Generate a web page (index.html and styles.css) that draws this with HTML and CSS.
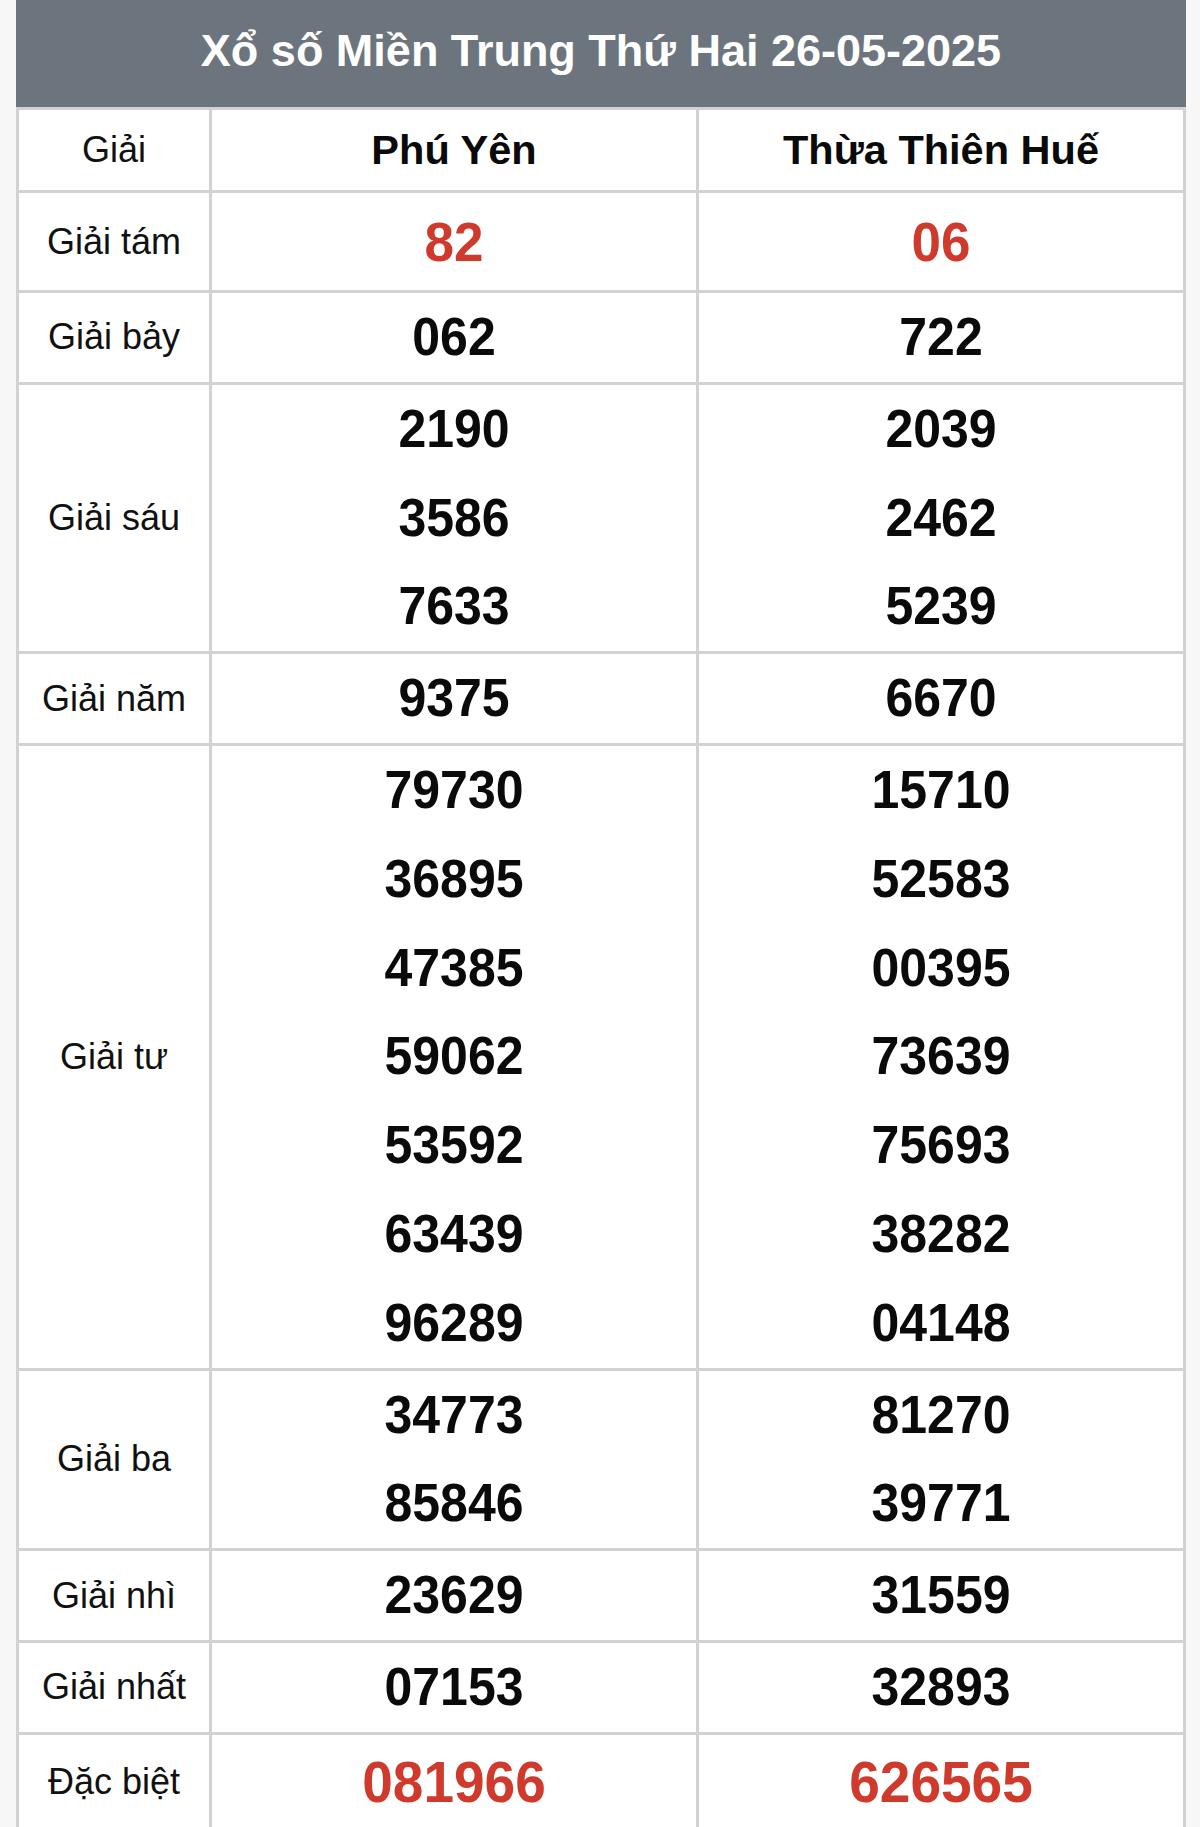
FILE: index.html
```html
<!DOCTYPE html>
<html lang="vi">
<head>
<meta charset="utf-8">
<title>Xổ số Miền Trung Thứ Hai 26-05-2025</title>
<link rel="stylesheet" href="styles.css">
</head>
<body>
<div class="wrap">
  <div class="title">Xổ số Miền Trung Thứ Hai 26-05-2025</div>
  <div class="grid">
    <div class="cell label head">Giải</div>
    <div class="cell name">Phú Yên</div>
    <div class="cell name">Thừa Thiên Huế</div>

    <div class="cell label tam">Giải tám</div>
    <div class="cell nums red tam"><div>82</div></div>
    <div class="cell nums red tam"><div>06</div></div>

    <div class="cell label">Giải bảy</div>
    <div class="cell nums"><div>062</div></div>
    <div class="cell nums"><div>722</div></div>

    <div class="cell label">Giải sáu</div>
    <div class="cell nums"><div>2190</div><div>3586</div><div>7633</div></div>
    <div class="cell nums"><div>2039</div><div>2462</div><div>5239</div></div>

    <div class="cell label">Giải năm</div>
    <div class="cell nums"><div>9375</div></div>
    <div class="cell nums"><div>6670</div></div>

    <div class="cell label">Giải tư</div>
    <div class="cell nums"><div>79730</div><div>36895</div><div>47385</div><div>59062</div><div>53592</div><div>63439</div><div>96289</div></div>
    <div class="cell nums"><div>15710</div><div>52583</div><div>00395</div><div>73639</div><div>75693</div><div>38282</div><div>04148</div></div>

    <div class="cell label">Giải ba</div>
    <div class="cell nums"><div>34773</div><div>85846</div></div>
    <div class="cell nums"><div>81270</div><div>39771</div></div>

    <div class="cell label">Giải nhì</div>
    <div class="cell nums"><div>23629</div></div>
    <div class="cell nums"><div>31559</div></div>

    <div class="cell label">Giải nhất</div>
    <div class="cell nums"><div>07153</div></div>
    <div class="cell nums"><div>32893</div></div>

    <div class="cell label db">Đặc biệt</div>
    <div class="cell nums red db"><div>081966</div></div>
    <div class="cell nums red db"><div>626565</div></div>
  </div>
</div>
</body>
</html>
```

FILE: styles.css
```css
html, body {
  margin: 0;
  padding: 0;
}
body {
  background: #f7f7f7;
  font-family: "Liberation Sans", Arial, sans-serif;
  color: #0a0a0a;
}
.wrap {
  width: 1170px;
  margin-left: 16px;
  background: #ffffff;
}
.title {
  height: 107px;
  background: #6c757d;
  color: #ffffff;
  font-weight: bold;
  font-size: 45px;
  display: flex;
  align-items: center;
  justify-content: center;
  padding-bottom: 6px;
  box-sizing: border-box;
}
.grid {
  display: grid;
  grid-template-columns: 190px 484px 484px;
  gap: 3px;
  padding: 3px;
  background: #d2d2d2;
}
.cell {
  background: #ffffff;
}
.label {
  display: flex;
  align-items: center;
  justify-content: center;
  font-size: 36px;
  color: #111;
}
.head {
  height: 80px;
}
.name {
  height: 80px;
  display: flex;
  align-items: center;
  justify-content: center;
  font-size: 41.5px;
  font-weight: bold;
  color: #0a0a0a;
}
.nums {
  display: flex;
  flex-direction: column;
  align-items: center;
  font-size: 50px;
  font-weight: bold;
}
.nums > div {
  height: 88.8px;
  line-height: 88.8px;
  transform: scaleY(1.06);
}
.tam.nums > div {
  height: 97px;
  line-height: 97px;
}
.red {
  color: #cf3a2d;
  font-size: 53px;
}
.db.nums > div {
  height: 95px;
  line-height: 95px;
}
.db.red {
  font-size: 55px;
}
```
